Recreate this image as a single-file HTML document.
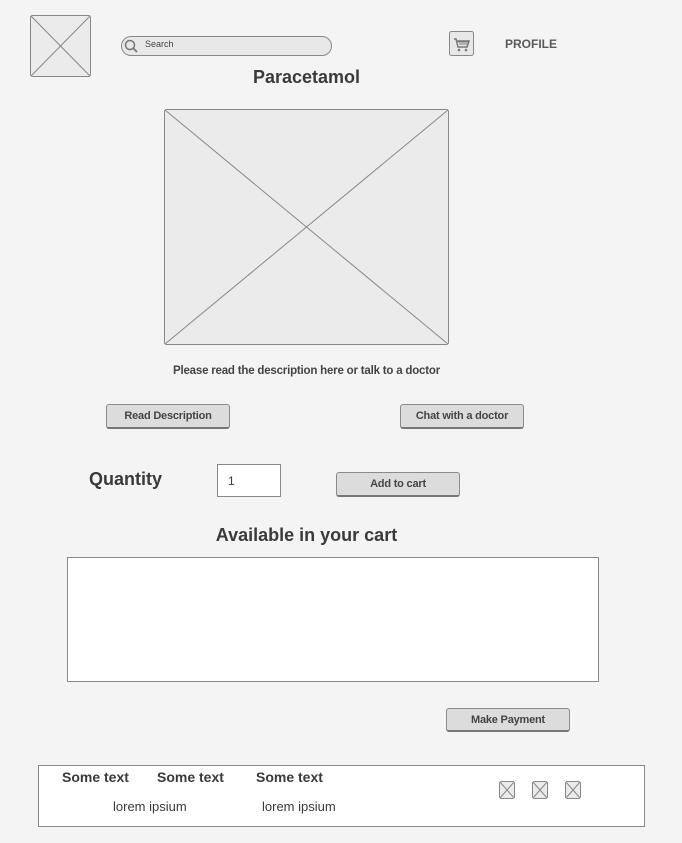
<!DOCTYPE html>
<html><head><meta charset="utf-8"><style>
*{margin:0;padding:0;box-sizing:border-box}
body{width:682px;height:843px;background:#f4f4f4;position:relative;overflow:hidden;font-family:"Liberation Sans","DejaVu Sans",sans-serif;color:#3a3a3a}
.a{position:absolute}
.btn{position:absolute;background:#dcdcdc;border:1px solid #8a8a8a;border-bottom:2px solid #777;border-radius:3px;font-size:11px;font-weight:bold;text-align:center;color:#444;display:flex;align-items:center;justify-content:center;letter-spacing:-0.2px}
.t{position:absolute;white-space:nowrap;font-weight:bold}
</style></head><body>
<svg class="a" style="left:30px;top:15px" width="62" height="63"><rect x="0.5" y="0.5" width="60" height="61" rx="2" fill="#ebebeb" stroke="#888"/><line x1="1" y1="1" x2="60" y2="61" stroke="#888"/><line x1="60" y1="1" x2="1" y2="61" stroke="#888"/></svg>
<div class="a" style="left:121px;top:36px;width:211px;height:20px;border:1px solid #888;border-radius:10px;background:#e8e8e8"></div>
<svg class="a" style="left:124px;top:39px" width="16" height="16"><circle cx="6" cy="6" r="4.5" fill="none" stroke="#777" stroke-width="1.5"/><line x1="9" y1="9" x2="13" y2="13" stroke="#777" stroke-width="1.8"/></svg>
<div class="t" style="left:145px;top:39px;font-size:9px;font-weight:normal;color:#444">Search</div>
<svg class="a" style="left:449px;top:31px" width="26" height="26"><rect x="0.5" y="0.5" width="24" height="24" rx="2" fill="#e8e8e8" stroke="#888"/><path d="M5 8h2l2 8h9l2-6H8" fill="none" stroke="#777" stroke-width="1.5"/><path d="M9 11h10M10 13h8" stroke="#777"/><circle cx="10" cy="19" r="1.3" fill="#777"/><circle cx="17" cy="19" r="1.3" fill="#777"/></svg>
<div class="t" style="left:505px;top:37px;font-size:12px;color:#5a5a5a">PROFILE</div>
<div class="t" style="left:0;width:613px;text-align:center;top:67px;font-size:18px">Paracetamol</div>
<svg class="a" style="left:164px;top:109px" width="286" height="237"><rect x="0.5" y="0.5" width="284" height="235" rx="2" fill="#ebebeb" stroke="#888"/><line x1="1" y1="1" x2="284" y2="235" stroke="#888"/><line x1="284" y1="1" x2="1" y2="235" stroke="#888"/></svg>
<div class="t" style="left:0;width:613px;text-align:center;top:365px;font-size:11.5px;color:#444;letter-spacing:-0.2px">Please read the description here or talk to a doctor</div>
<div class="btn" style="left:106px;top:404px;width:124px;height:25px">Read Description</div>
<div class="btn" style="left:400px;top:404px;width:124px;height:25px">Chat with a doctor</div>
<div class="t" style="left:89px;top:469px;font-size:18px">Quantity</div>
<div class="a" style="left:217px;top:464px;width:64px;height:33px;border:1px solid #888;background:#fff;font-size:12px;padding:9px 0 0 10px">1</div>
<div class="btn" style="left:336px;top:472px;width:124px;height:25px">Add to cart</div>
<div class="t" style="left:0;width:613px;text-align:center;top:525px;font-size:18px">Available in your cart</div>
<div class="a" style="left:67px;top:557px;width:532px;height:125px;border:1px solid #888;background:#fff"></div>
<div class="btn" style="left:446px;top:708px;width:124px;height:24px">Make Payment</div>
<div class="a" style="left:38px;top:765px;width:607px;height:62px;border:1px solid #888;background:#fff"></div>
<div class="t" style="left:62px;top:769px;font-size:14px">Some text</div>
<div class="t" style="left:157px;top:769px;font-size:14px">Some text</div>
<div class="t" style="left:256px;top:769px;font-size:14px">Some text</div>
<div class="t" style="left:113px;top:799px;font-size:13px;font-weight:normal">lorem ipsium</div>
<div class="t" style="left:262px;top:799px;font-size:13px;font-weight:normal">lorem ipsium</div>
<svg class="a" style="left:499px;top:781px" width="84" height="19"><g fill="#ebebeb" stroke="#888"><rect x="0.5" y="0.5" width="15" height="17" rx="2"/><rect x="33.5" y="0.5" width="15" height="17" rx="2"/><rect x="66.5" y="0.5" width="15" height="17" rx="2"/></g><g stroke="#888"><path d="M1 1l14 16M15 1L1 17M34 1l14 16M48 1L34 17M67 1l14 16M81 1L67 17"/></g></svg>
</body></html>
